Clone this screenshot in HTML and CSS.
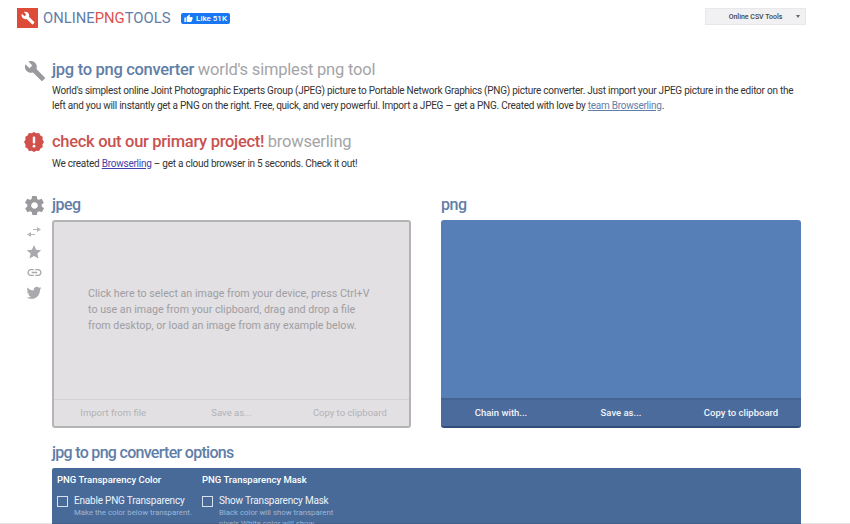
FILE: index.html
```html
<!DOCTYPE html>
<html lang="en">
<head>
  <meta charset="UTF-8">
  <title>jpg to png converter</title>
  <link rel="stylesheet" href="styles.css">
</head>
<body>
  <div class="header">
    <div class="logo-box">
      <svg width="14" height="14" viewBox="0 0 24 24"><path fill="#fff" d="M22.7 19l-9.100-9.100c.9-2.300.4-5-1.500-6.900-2-2-5-2.400-7.400-1.300L9 6 6 9 1.600 4.700C.4 7.100.9 10.100 2.900 12.100c1.900 1.900 4.600 2.400 6.900 1.500l9.100 9.100c.4.400 1 .4 1.400 0l2.300-2.300c.5-.4.5-1.100.1-1.400z"/></svg>
    </div>
    <div class="logo-text">ONLINE<span class="logo-red">PNG</span>TOOLS</div>
    <div class="like-btn">
      <svg width="9" height="9" viewBox="0 0 24 24"><path fill="#fff" d="M1 21h4V9H1v12zm22-11c0-1.100-.9-2-2-2h-6.300l1-4.600v-.3c0-.4-.2-.8-.4-1.100L14.200 1 7.600 7.600C7.200 8 7 8.500 7 9v10c0 1.100.9 2 2 2h9c.8 0 1.500-.5 1.800-1.200l3-7.100c.1-.2.2-.5.2-.7v-2z"/></svg>
      Like 51K
    </div>
    <div class="tools-select">
      <span>Online CSV Tools</span>
      <span class="select-arrow"></span>
    </div>
  </div>

  <div class="section section-first">
    <div class="side-icon">
      <svg width="22" height="22" viewBox="0 0 24 24"><path fill="#9a9a9e" d="M22.7 19l-9.100-9.100c.9-2.300.4-5-1.500-6.900-2-2-5-2.400-7.400-1.300L9 6 6 9 1.600 4.700C.4 7.100.9 10.100 2.900 12.100c1.900 1.900 4.600 2.400 6.900 1.500l9.100 9.100c.4.400 1 .4 1.400 0l2.300-2.300c.5-.4.5-1.100.1-1.400z"/></svg>
    </div>
    <div class="section-body">
      <h1 class="title">jpg to png converter <span class="title-sub">world's simplest png tool</span></h1>
      <p class="text">World's simplest online Joint Photographic Experts Group (JPEG) picture to Portable Network Graphics (PNG) picture converter. Just import your JPEG picture in the editor on the left and you will instantly get a PNG on the right. Free, quick, and very powerful. Import a JPEG – get a PNG. Created with love by <a class="team-link" href="#">team Browserling</a>.</p>
    </div>
  </div>

  <div class="section section-second">
    <div class="side-icon">
      <svg width="20" height="20" viewBox="0 0 20 20"><path fill="#d2504c" d="M10 0l2.400 1.300 2.700-.3 1.300 2.400 2.300 1.300-.2 2.700L20 10l-1.500 2.600.2 2.700-2.300 1.300-1.300 2.400-2.700-.3L10 20l-2.400-1.300-2.700.3-1.300-2.400-2.300-1.300.2-2.700L0 10l1.500-2.600-.2-2.700 2.300-1.300L4.900 1l2.700.3z"/><rect x="8.800" y="4.500" width="2.400" height="7" rx="1" fill="#fff"/><circle cx="10" cy="14.200" r="1.400" fill="#fff"/></svg>
    </div>
    <div class="section-body">
      <h1 class="title title-red">check out our primary project! <span class="title-sub">browserling</span></h1>
      <p class="text text-project">We created <a class="project-link" href="#">Browserling</a> – get a cloud browser in 5 seconds. Check it out!</p>
    </div>
  </div>

  <div class="tool">
    <div class="tool-icons">
      <svg class="gear" width="23" height="23" viewBox="0 0 24 24"><path fill="#9a9a9e" d="M19.400 13c.1-.3.1-.7.1-1s0-.7-.1-1l2.100-1.600c.2-.2.2-.4.100-.6l-2-3.500c-.1-.2-.4-.3-.6-.2l-2.500 1c-.5-.4-1.100-.7-1.700-1l-.4-2.600c0-.3-.2-.5-.5-.5h-4c-.2 0-.5.200-.5.400l-.4 2.700c-.6.200-1.100.6-1.700 1l-2.500-1c-.2-.1-.5 0-.6.200l-2 3.500c-.1.200-.1.500.1.600L4.600 11c0 .3-.1.700-.1 1s0 .7.1 1l-2.100 1.600c-.2.200-.2.400-.1.600l2 3.500c.1.200.4.300.6.200l2.500-1c.5.400 1.100.7 1.700 1l.4 2.600c0 .3.300.5.500.5h4c.3 0 .5-.2.500-.4l.4-2.700c.6-.2 1.200-.6 1.700-1l2.500 1c.2.100.5 0 .6-.2l2-3.500c.1-.2.100-.5-.1-.6L19.400 13zM12 15.500c-1.900 0-3.500-1.600-3.500-3.500s1.600-3.500 3.500-3.500 3.500 1.600 3.500 3.500-1.600 3.500-3.500 3.500z"/></svg>
      <svg width="16" height="16" viewBox="0 0 16 16"><path fill="none" stroke="#b8b8bc" stroke-width="1.200" d="M7 5.500h7M2 10.500h7"/><path fill="#b8b8bc" d="M11 3l4 2.500L11 8zM5 8l-4 2.500L5 13z"/></svg>
      <svg width="16" height="16" viewBox="0 0 24 24"><path fill="#aaaaae" d="M12 1.500l3.200 7 7.600.8-5.700 5.100 1.600 7.500L12 18l-6.700 3.900 1.600-7.500-5.700-5.100 7.600-.8z"/></svg>
      <svg width="17" height="17" viewBox="0 0 24 24"><path fill="#aaaaae" d="M3.900 12c0-1.700 1.400-3.100 3.100-3.100h4V7H7c-2.800 0-5 2.200-5 5s2.200 5 5 5h4v-1.900H7c-1.700 0-3.100-1.400-3.100-3.100zM8 13h8v-2H8v2zm9-6h-4v1.900h4c1.700 0 3.100 1.400 3.100 3.100s-1.400 3.100-3.100 3.100h-4V17h4c2.800 0 5-2.200 5-5s-2.200-5-5-5z"/></svg>
      <svg width="16" height="16" viewBox="0 0 24 24"><path fill="#aaaaae" d="M23 4.900c-.8.400-1.700.6-2.600.7.900-.6 1.700-1.400 2-2.500-.9.500-1.800.9-2.900 1.100C18.700 3.300 17.500 2.800 16.200 2.800c-2.500 0-4.600 2-4.600 4.500 0 .4 0 .7.100 1-3.800-.2-7.200-2-9.400-4.700-.4.700-.6 1.400-.6 2.300 0 1.600.8 3 2 3.800-.7 0-1.400-.2-2-.6v.1c0 2.200 1.600 4 3.700 4.400-.4.100-.8.200-1.200.2-.3 0-.6 0-.9-.1.600 1.800 2.300 3.100 4.300 3.200-1.600 1.200-3.500 2-5.700 2-.4 0-.7 0-1.100-.1 2 1.300 4.500 2 7.100 2 8.500 0 13.100-7 13.100-13.100v-.6c.9-.6 1.700-1.400 2.300-2.300z"/></svg>
    </div>
    <div class="tool-main">
      <div class="panels">
        <div class="panel-col">
          <h2 class="panel-title">jpeg</h2>
          <div class="panel panel-input">
            <div class="panel-area input-hint">Click here to select an image from your device, press Ctrl+V to use an image from your clipboard, drag and drop a file from desktop, or load an image from any example below.</div>
            <div class="panel-bar bar-input">
              <span>Import from file</span>
              <span>Save as...</span>
              <span>Copy to clipboard</span>
            </div>
          </div>
        </div>
        <div class="panel-col panel-col-right">
          <h2 class="panel-title">png</h2>
          <div class="panel panel-output">
            <div class="panel-area"></div>
            <div class="panel-bar bar-output">
              <span>Chain with...</span>
              <span>Save as...</span>
              <span>Copy to clipboard</span>
            </div>
          </div>
        </div>
      </div>

      <h2 class="options-title">jpg to png converter options</h2>
      <div class="options">
        <div class="option-col">
          <div class="option-head">PNG Transparency Color</div>
          <div class="option-row">
            <span class="checkbox"></span>
            <div>
              <div class="option-label">Enable PNG Transparency</div>
              <div class="option-desc">Make the color below transparent.</div>
            </div>
          </div>
        </div>
        <div class="option-col">
          <div class="option-head">PNG Transparency Mask</div>
          <div class="option-row">
            <span class="checkbox"></span>
            <div>
              <div class="option-label">Show Transparency Mask</div>
              <div class="option-desc">Black color will show transparent<br>pixels White color will show</div>
            </div>
          </div>
        </div>
      </div>
    </div>
  </div>
  <div class="page-edge"></div>
</body>
</html>
```

FILE: styles.css
```css
html, body {
  height: 524px;
  overflow: hidden;
}

body {
  margin: 0;
  background: #fff;
  font-family: Roboto, Arial, sans-serif;
  color: #333;
  position: relative;
}

.page-edge {
  position: absolute;
  left: 0;
  right: 0;
  bottom: 0;
  height: 1px;
  background: rgba(0, 0, 0, 0.1);
}

.header {
  display: flex;
  align-items: center;
  height: 20px;
  padding: 8px 44px 0 17px;
}

.logo-box {
  width: 21px;
  height: 20px;
  background: #dd4b39;
  display: flex;
  align-items: center;
  justify-content: center;
}

.logo-text {
  margin-left: 5px;
  font-size: 14.800px;
  color: #5f7ea8;
  width: 133px;
}

.logo-red {
  color: #d9534f;
}

.like-btn {
  margin-left: 5px;
  width: 49px;
  height: 11px;
  background: #1877f2;
  border-radius: 2px;
  color: #fff;
  font-size: 8px;
  font-weight: 500;
  display: flex;
  align-items: center;
  justify-content: center;
  gap: 3px;
}

.tools-select {
  margin-left: auto;
  width: 101px;
  height: 17px;
  box-sizing: border-box;
  align-self: flex-start;
  background: #f1f0f3;
  border: 1px solid #e8e8ea;
  font-size: 7px;
  font-weight: 500;
  color: #444;
  display: flex;
  align-items: center;
  justify-content: center;
  position: relative;
}

.select-arrow {
  position: absolute;
  right: 5px;
  top: 6px;
  border-left: 2.5px solid transparent;
  border-right: 2.5px solid transparent;
  border-top: 3px solid #666;
}

.section {
  display: flex;
  padding-left: 24px;
  padding-right: 50px;
}

.section-first {
  margin-top: 31px;
}

.section-second {
  margin-top: 18px;
}

.side-icon {
  width: 28px;
  flex: none;
  padding-top: 1px;
}

.title {
  margin: 0;
  font-size: 16.500px;
  line-height: 22px;
  font-weight: 500;
  color: #5f7ea8;
  letter-spacing: -0.3px;
}

.title-red {
  color: #c9524f;
}

.title-sub {
  color: #a4a4a8;
  font-weight: 400;
  letter-spacing: -0.2px;
}

.text {
  margin: 3px 0 0;
  font-size: 10px;
  line-height: 14.500px;
  letter-spacing: -0.250px;
  color: #333;
}

.text-project {
  margin-top: 4px;
}

.team-link {
  color: #5f7ea8;
}

.project-link {
  color: #3f3fae;
}

.tool {
  display: flex;
  margin-top: 22px;
  padding-left: 24px;
}

.tool-icons {
  width: 20px;
  margin-right: 8px;
  flex: none;
  display: flex;
  flex-direction: column;
  align-items: center;
  gap: 4px;
}

.gear {
  margin-bottom: 3px;
}

.tool-main {
  width: 749px;
}

.panels {
  display: flex;
  gap: 30px;
}

.panel-col {
  width: 359px;
}

.panel-col-right {
  width: 360px;
}

.panel-title {
  margin: 0 0 4px;
  font-size: 16px;
  line-height: 22px;
  font-weight: 500;
  color: #5f7ea8;
  letter-spacing: -0.500px;
}

.panel {
  height: 208px;
  border-radius: 3px;
  display: flex;
  flex-direction: column;
  box-sizing: border-box;
}

.panel-input {
  background: #e2e0e3;
  border: 2px solid #b4b4b6;
}

.panel-output {
  background: #567fb7;
  border-bottom: 2px solid #2f4f7a;
}

.panel-area {
  flex: 1;
}

.input-hint {
  padding: 64px 35px 0 34px;
  font-size: 10.700px;
  line-height: 16px;
  color: #9e9ea2;
}

.panel-bar {
  height: 26px;
  display: flex;
  align-items: center;
  font-size: 9.500px;
}

.panel-bar span {
  flex: 1;
  text-align: center;
}

.bar-input {
  border-top: 1px solid #d2d1d4;
  color: #b2b2b5;
}

.bar-output {
  background: #4a6b9b;
  border-top: 2px solid #446390;
  color: #f2f4f8;
  font-weight: 500;
}

.options-title {
  margin: 14px 0 4px;
  font-size: 16px;
  line-height: 22px;
  font-weight: 500;
  color: #5f7ea8;
  letter-spacing: -0.700px;
}

.options {
  display: flex;
  gap: 5px;
  height: 50px;
  padding: 5px;
  background: #486a98;
  border-radius: 2px 2px 0 0;
  overflow: hidden;
  color: #fff;
}

.option-col {
  width: 140px;
}

.option-head {
  font-size: 9.500px;
  font-weight: 500;
  line-height: 13px;
}

.option-row {
  display: flex;
  margin-top: 8px;
  gap: 6px;
}

.checkbox {
  width: 9px;
  height: 9px;
  flex: none;
  margin-top: 2px;
  border: 1px solid #d6e0ee;
}

.option-label {
  font-size: 10px;
  line-height: 13px;
  letter-spacing: -0.200px;
  color: #eef2f8;
}

.option-desc {
  margin-top: 0;
  font-size: 7.800px;
  line-height: 11px;
  color: #9fb6d6;
}
```
